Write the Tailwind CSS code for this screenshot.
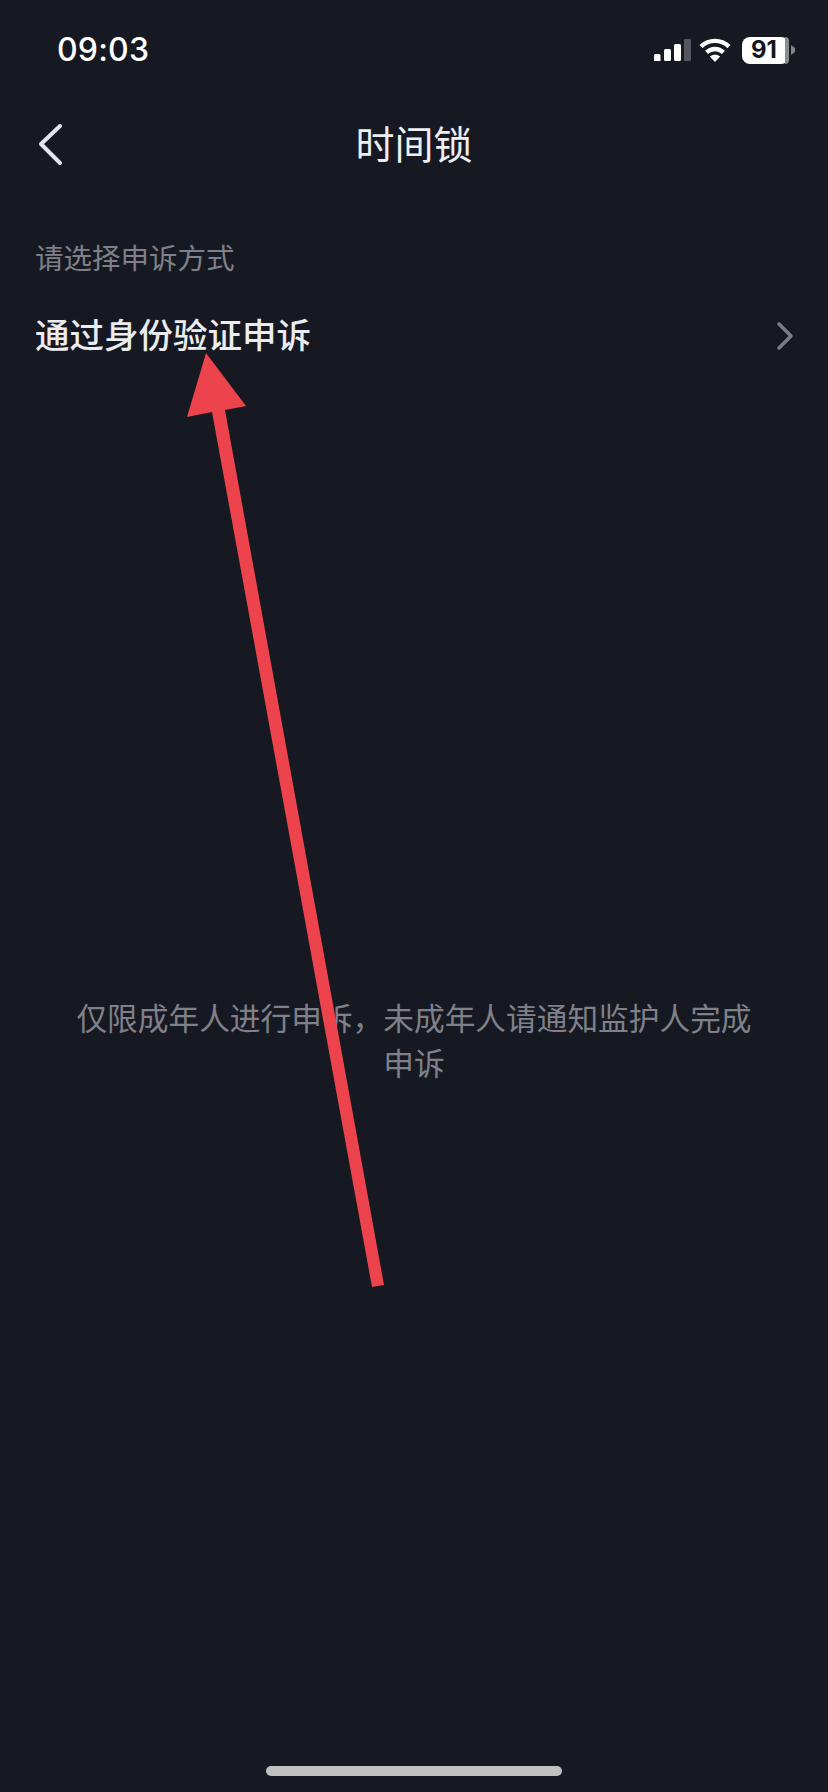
<!DOCTYPE html>
<html lang="zh">
<head>
  <meta charset="UTF-8" />
  <meta name="viewport" content="width=device-width, initial-scale=1.0" />
  <title>时间锁</title>
  <script src="https://cdn.jsdelivr.net/npm/@tailwindcss/browser@4"></script>
</head>
<body class="bg-[#161922] font-['Inter','Noto_Sans_CJK_SC',sans-serif]">
  <div class="relative w-[828px] h-[1792px] overflow-hidden bg-[#161922]">

    <!-- 状态栏 -->
    <div class="flex items-center justify-between h-[100px] pl-[57px] pr-[33px]">
      <span class="text-[32px] leading-none font-medium text-white tracking-[0.2px]">09:03</span>
      <div class="flex items-center">
        <svg class="w-[37px] h-[22px]" viewBox="0 0 37 22">
          <rect x="0" y="15" width="6.5" height="8" rx="1.5" fill="#fff" />
          <rect x="10" y="10" width="7" height="12" rx="1.5" fill="#fff" />
          <rect x="20" y="5" width="7" height="17" rx="1.5" fill="#fff" />
          <rect x="30" y="0" width="7" height="22" rx="1" fill="#55575c" />
        </svg>
        <svg class="w-[32px] h-[24px] ml-[8px]" viewBox="0 0 32 24" fill="none" stroke="#fff" stroke-width="4.4">
          <path d="M2 8.6 C10 1 22 1 30 8.6" />
          <path d="M7.6 14.4 C12.6 9.8 19.4 9.8 24.4 14.4" />
          <path d="M16 24 L10.8 18.6 C13.8 16 18.2 16 21.2 18.6 Z" fill="#fff" stroke="none" />
        </svg>
        <div class="relative flex items-center justify-center w-[47px] h-[27px] ml-[11px] rounded-[8px] bg-white">
          <div class="absolute right-0 top-0 bottom-0 w-[4px] rounded-r-[8px] bg-[#8b8c90]"></div>
          <span class="relative text-[24px] leading-none font-bold text-[#15171d] pr-[3px]">91</span>
        </div>
        <svg class="w-[4px] h-[10px] ml-[2px]" viewBox="0 0 4 10"><path d="M0 0 L4 3 V7 L0 10 Z" fill="#85868a" /></svg>
      </div>
    </div>

    <!-- 导航栏 -->
    <div class="relative flex items-center justify-center h-[88px]">
      <button class="absolute left-[36px] top-[22px]">
        <svg class="block w-[30px] h-[44px]" viewBox="0 0 30 44" fill="none" stroke="#e4e5e9" stroke-width="4" stroke-linecap="round" stroke-linejoin="round">
          <path d="M24 4 L5 22 L24 41" />
        </svg>
      </button>
      <h1 class="text-[39px] leading-none font-normal text-[#eeeff3]">时间锁</h1>
    </div>

    <!-- 申诉方式 -->
    <div class="px-[35px] pt-[53px]">
      <p class="text-[28.5px] leading-[36px] text-[#808188]">请选择申诉方式</p>
      <div class="flex items-center justify-between h-[60px] mt-[29px]">
        <span class="text-[34.5px] leading-none font-medium text-[#ebecf0]">通过身份验证申诉</span>
        <svg class="w-[18px] h-[30px] mr-[-1px]" viewBox="0 0 18 30" fill="none" stroke="#7b7c83" stroke-width="3.6" stroke-linecap="round" stroke-linejoin="round">
          <path d="M3 3 L15 15 L3 27" />
        </svg>
      </div>
    </div>

    <!-- 提示 -->
    <p class="w-[700px] mx-auto mt-[630px] text-center text-[30.7px] leading-[45px] text-[#808188]">仅限成年人进行申诉，未成年人请通知监护人完成申诉</p>

    <!-- 标注箭头 -->
    <svg class="absolute inset-0 w-[828px] h-[1792px]" viewBox="0 0 828 1792">
      <path d="M206 353 L246 406 L225 410 L384 1285 L372 1287 L212 412 L187 417 Z" fill="#ec434c" />
    </svg>

    <!-- 底部横条 -->
    <div class="absolute left-[266px] top-[1766px] w-[296px] h-[10px] rounded-full bg-[#c0c1c0]"></div>
  </div>
</body>
</html>
